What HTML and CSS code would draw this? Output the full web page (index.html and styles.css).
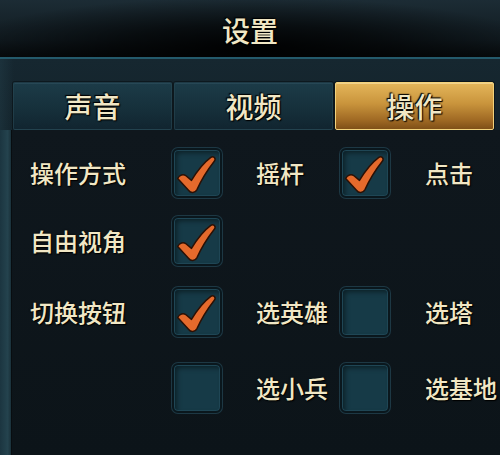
FILE: index.html
```html
<!DOCTYPE html>
<html lang="zh-CN">
<head>
<meta charset="utf-8">
<title>设置</title>
<link rel="stylesheet" href="styles.css">
</head>
<body>
<div class="screen">
  <header class="header"><h1 class="title">设置</h1></header>
  <nav class="tabs">
    <div class="tab">声音</div>
    <div class="tab">视频</div>
    <div class="tab active">操作</div>
  </nav>
  <main class="body">
    <div class="frame-left"></div>
    <section class="panel">
      <div class="row">
        <span class="label">操作方式</span>
        <span class="box checked"><svg viewBox="0 0 50 50"><path class="tick" d="M4,31 C6,27 10,26 13,28 L19,33 C25,23 32,14 40,8 C43,6 46,9 44,12 C37,21 30,32 25,43 C23,47 18,47 16,44 Z"/></svg></span>
        <span class="label mid">摇杆</span>
        <span class="box checked"><svg viewBox="0 0 50 50"><path class="tick" d="M4,31 C6,27 10,26 13,28 L19,33 C25,23 32,14 40,8 C43,6 46,9 44,12 C37,21 30,32 25,43 C23,47 18,47 16,44 Z"/></svg></span>
        <span class="label end">点击</span>
      </div>
      <div class="row">
        <span class="label">自由视角</span>
        <span class="box checked"><svg viewBox="0 0 50 50"><path class="tick" d="M4,31 C6,27 10,26 13,28 L19,33 C25,23 32,14 40,8 C43,6 46,9 44,12 C37,21 30,32 25,43 C23,47 18,47 16,44 Z"/></svg></span>
      </div>
      <div class="row">
        <span class="label">切换按钮</span>
        <span class="box checked"><svg viewBox="0 0 50 50"><path class="tick" d="M4,31 C6,27 10,26 13,28 L19,33 C25,23 32,14 40,8 C43,6 46,9 44,12 C37,21 30,32 25,43 C23,47 18,47 16,44 Z"/></svg></span>
        <span class="label mid">选英雄</span>
        <span class="box"></span>
        <span class="label end">选塔</span>
      </div>
      <div class="row">
        <span class="label"></span>
        <span class="box"></span>
        <span class="label mid">选小兵</span>
        <span class="box"></span>
        <span class="label end">选基地</span>
      </div>
    </section>
  </main>
</div>
</body>
</html>
```

FILE: styles.css
```css
* { box-sizing: border-box; }
html, body { margin: 0; padding: 0; }
body {
  width: 500px;
  height: 455px;
  overflow: hidden;
  background: #0e161c;
  font-family: "Noto Sans CJK SC", "Noto Sans", sans-serif;
  color: #f1e7c5;
}
.screen {
  width: 500px;
  height: 455px;
  display: flex;
  flex-direction: column;
}
.header {
  height: 59px;
  flex: none;
  display: flex;
  align-items: center;
  justify-content: center;
  padding-top: 3px;
  border-bottom: 2px solid #245a6b;
  background:
    radial-gradient(ellipse 60% 90% at 50% 85%, rgba(0,0,0,0.95) 0%, rgba(0,0,0,0.6) 45%, rgba(0,0,0,0) 100%),
    linear-gradient(to bottom, #1c2c35 0%, #111b21 70%, #070b0d 100%);
}
.title {
  margin: 0;
  font-size: 28px;
  font-weight: 500;
  line-height: 1;
  text-shadow: 0 0 2px #000, 1px 1px 1px #000, -1px -1px 1px #000;
}
.tabs {
  flex: none;
  height: 71px;
  display: flex;
  gap: 2px;
  padding: 23px 6px 0 13px;
  background:
    linear-gradient(to right, rgba(40,70,82,0.35) 0, rgba(0,0,0,0) 14px),
    linear-gradient(to bottom, #162730, #13232b);
}
.tab {
  flex: 1;
  height: 48px;
  display: flex;
  align-items: center;
  justify-content: center;
  font-size: 28px;
  font-weight: 500;
  line-height: 1;
  border: 1px solid rgba(40,71,83,0.6);
  border-radius: 2px;
  background: linear-gradient(to bottom, #1c3b48 0%, #16303b 55%, #112530 100%);
  box-shadow: inset 0 1px 0 rgba(120,170,190,0.12), 0 0 0 1px rgba(0,0,0,0.35);
  text-shadow: 0 0 2px #000, 1px 1px 1px #000, -1px -1px 1px #000;
}
.tab.active {
  border: 1px solid #f2d27c;
  background: linear-gradient(to bottom, #e4b65a 0%, #c9943c 45%, #a06a24 80%, #7f4f17 100%);
  box-shadow: inset 0 1px 0 rgba(255,240,190,0.5), 0 0 0 1px rgba(0,0,0,0.4);
}
.body {
  flex: 1;
  display: flex;
}
.frame-left {
  width: 12px;
  flex: none;
  background: linear-gradient(to right, #1b3540 0%, #24434e 70%, #1a313a 100%);
  border-right: 1px solid #080d10;
}
.panel {
  flex: 1;
  padding-top: 18px;
  background: linear-gradient(to bottom, #0f171d, #0c1419);
  display: flex;
  flex-direction: column;
}
.row {
  display: grid;
  grid-template-columns: 142px 50px 118px 50px 1fr;
  align-items: center;
  height: 50px;
  padding-left: 18px;
}
.row:nth-child(2) { margin-top: 18px; }
.row:nth-child(3) { margin-top: 21px; }
.row:nth-child(4) { margin-top: 26px; }
.label {
  font-size: 24px;
  font-weight: 500;
  line-height: 1;
  white-space: nowrap;
  text-shadow: 0 0 2px #000, 1px 1px 1px #000;
}
.label.mid { padding-left: 34px; }
.label.end { padding-left: 35px; }
.box {
  width: 50px;
  height: 50px;
  border-radius: 6px;
  border: 2px solid #0a171d;
  background: #163a47;
  box-shadow:
    0 0 0 1px #1d3844,
    inset 0 0 0 1px #1f4655,
    inset 3px 3px 5px rgba(0,0,0,0.45);
  display: block;
}
.box svg {
  display: block;
  width: 46px;
  height: 46px;
}
.tick {
  fill: #e56a2c;
  stroke: #2a1005;
  stroke-width: 1.6;
  stroke-linejoin: round;
}
```
